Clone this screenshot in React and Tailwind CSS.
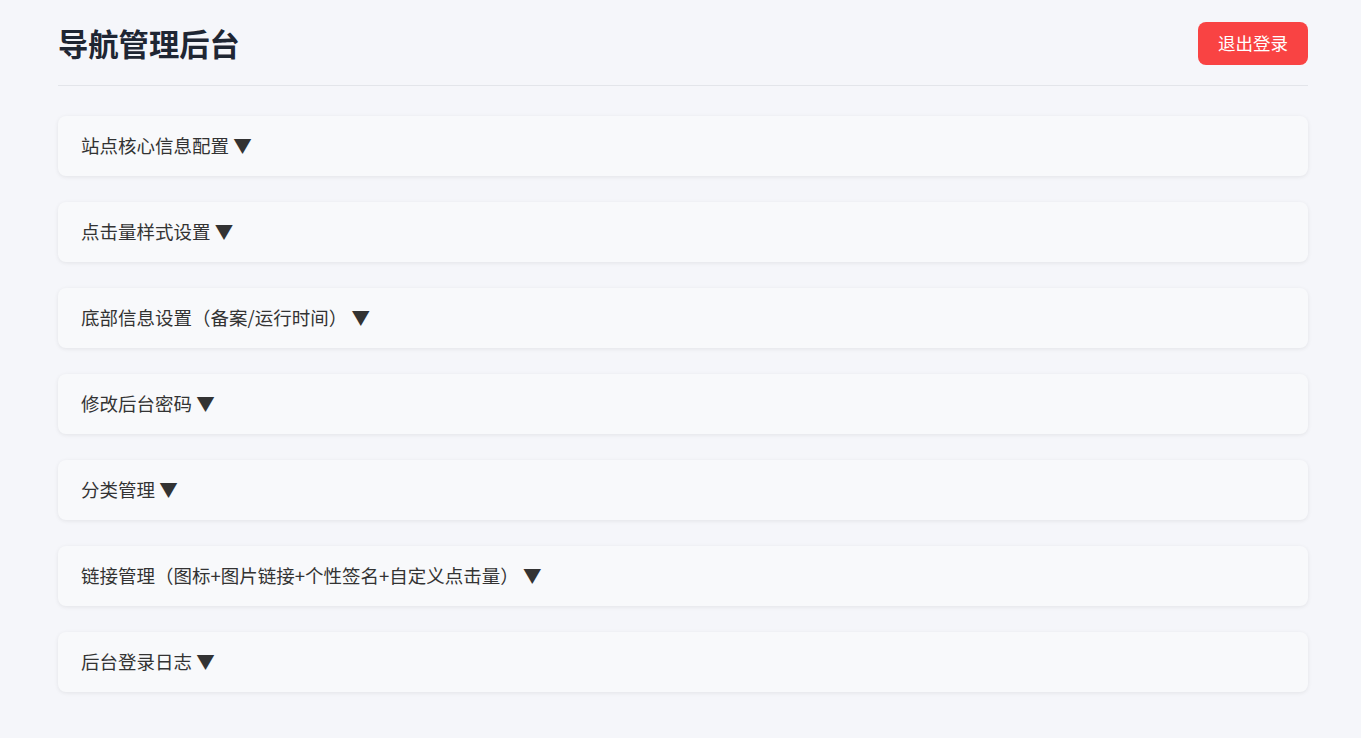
const sections = [
  "站点核心信息配置 ▼",
  "点击量样式设置 ▼",
  "底部信息设置（备案/运行时间） ▼",
  "修改后台密码 ▼",
  "分类管理 ▼",
  "链接管理（图标+图片链接+个性签名+自定义点击量） ▼",
  "后台登录日志 ▼",
];

export default function App() {
  return (
    <div className="min-h-screen bg-[#f5f6fa] font-['Microsoft_YaHei','Noto_Sans_CJK_SC',sans-serif]">
      <div className="ml-[58px] w-[1250px] pt-[22px] pb-10">
        <header className="flex items-center justify-between border-b border-[#e3e5ea] pb-5">
          <h1 className="text-[30.3px] font-bold leading-[43px] text-[#1f2633]">导航管理后台</h1>
          <button className="h-[43px] rounded-[8px] bg-[#f94343] px-5 text-[17.5px] text-white">退出登录</button>
        </header>
        <div className="mt-[30px] flex flex-col gap-[26px]">
          {sections.map((title) => (
            <div key={title} className="flex h-[60px] items-center rounded-[8px] bg-[#f8f9fb] px-[23px] pb-px shadow-[0_1px_4px_rgba(0,0,0,0.08)]">
              <span className="text-[18.5px] text-[#333]">{title}</span>
            </div>
          ))}
        </div>
      </div>
    </div>
  );
}
